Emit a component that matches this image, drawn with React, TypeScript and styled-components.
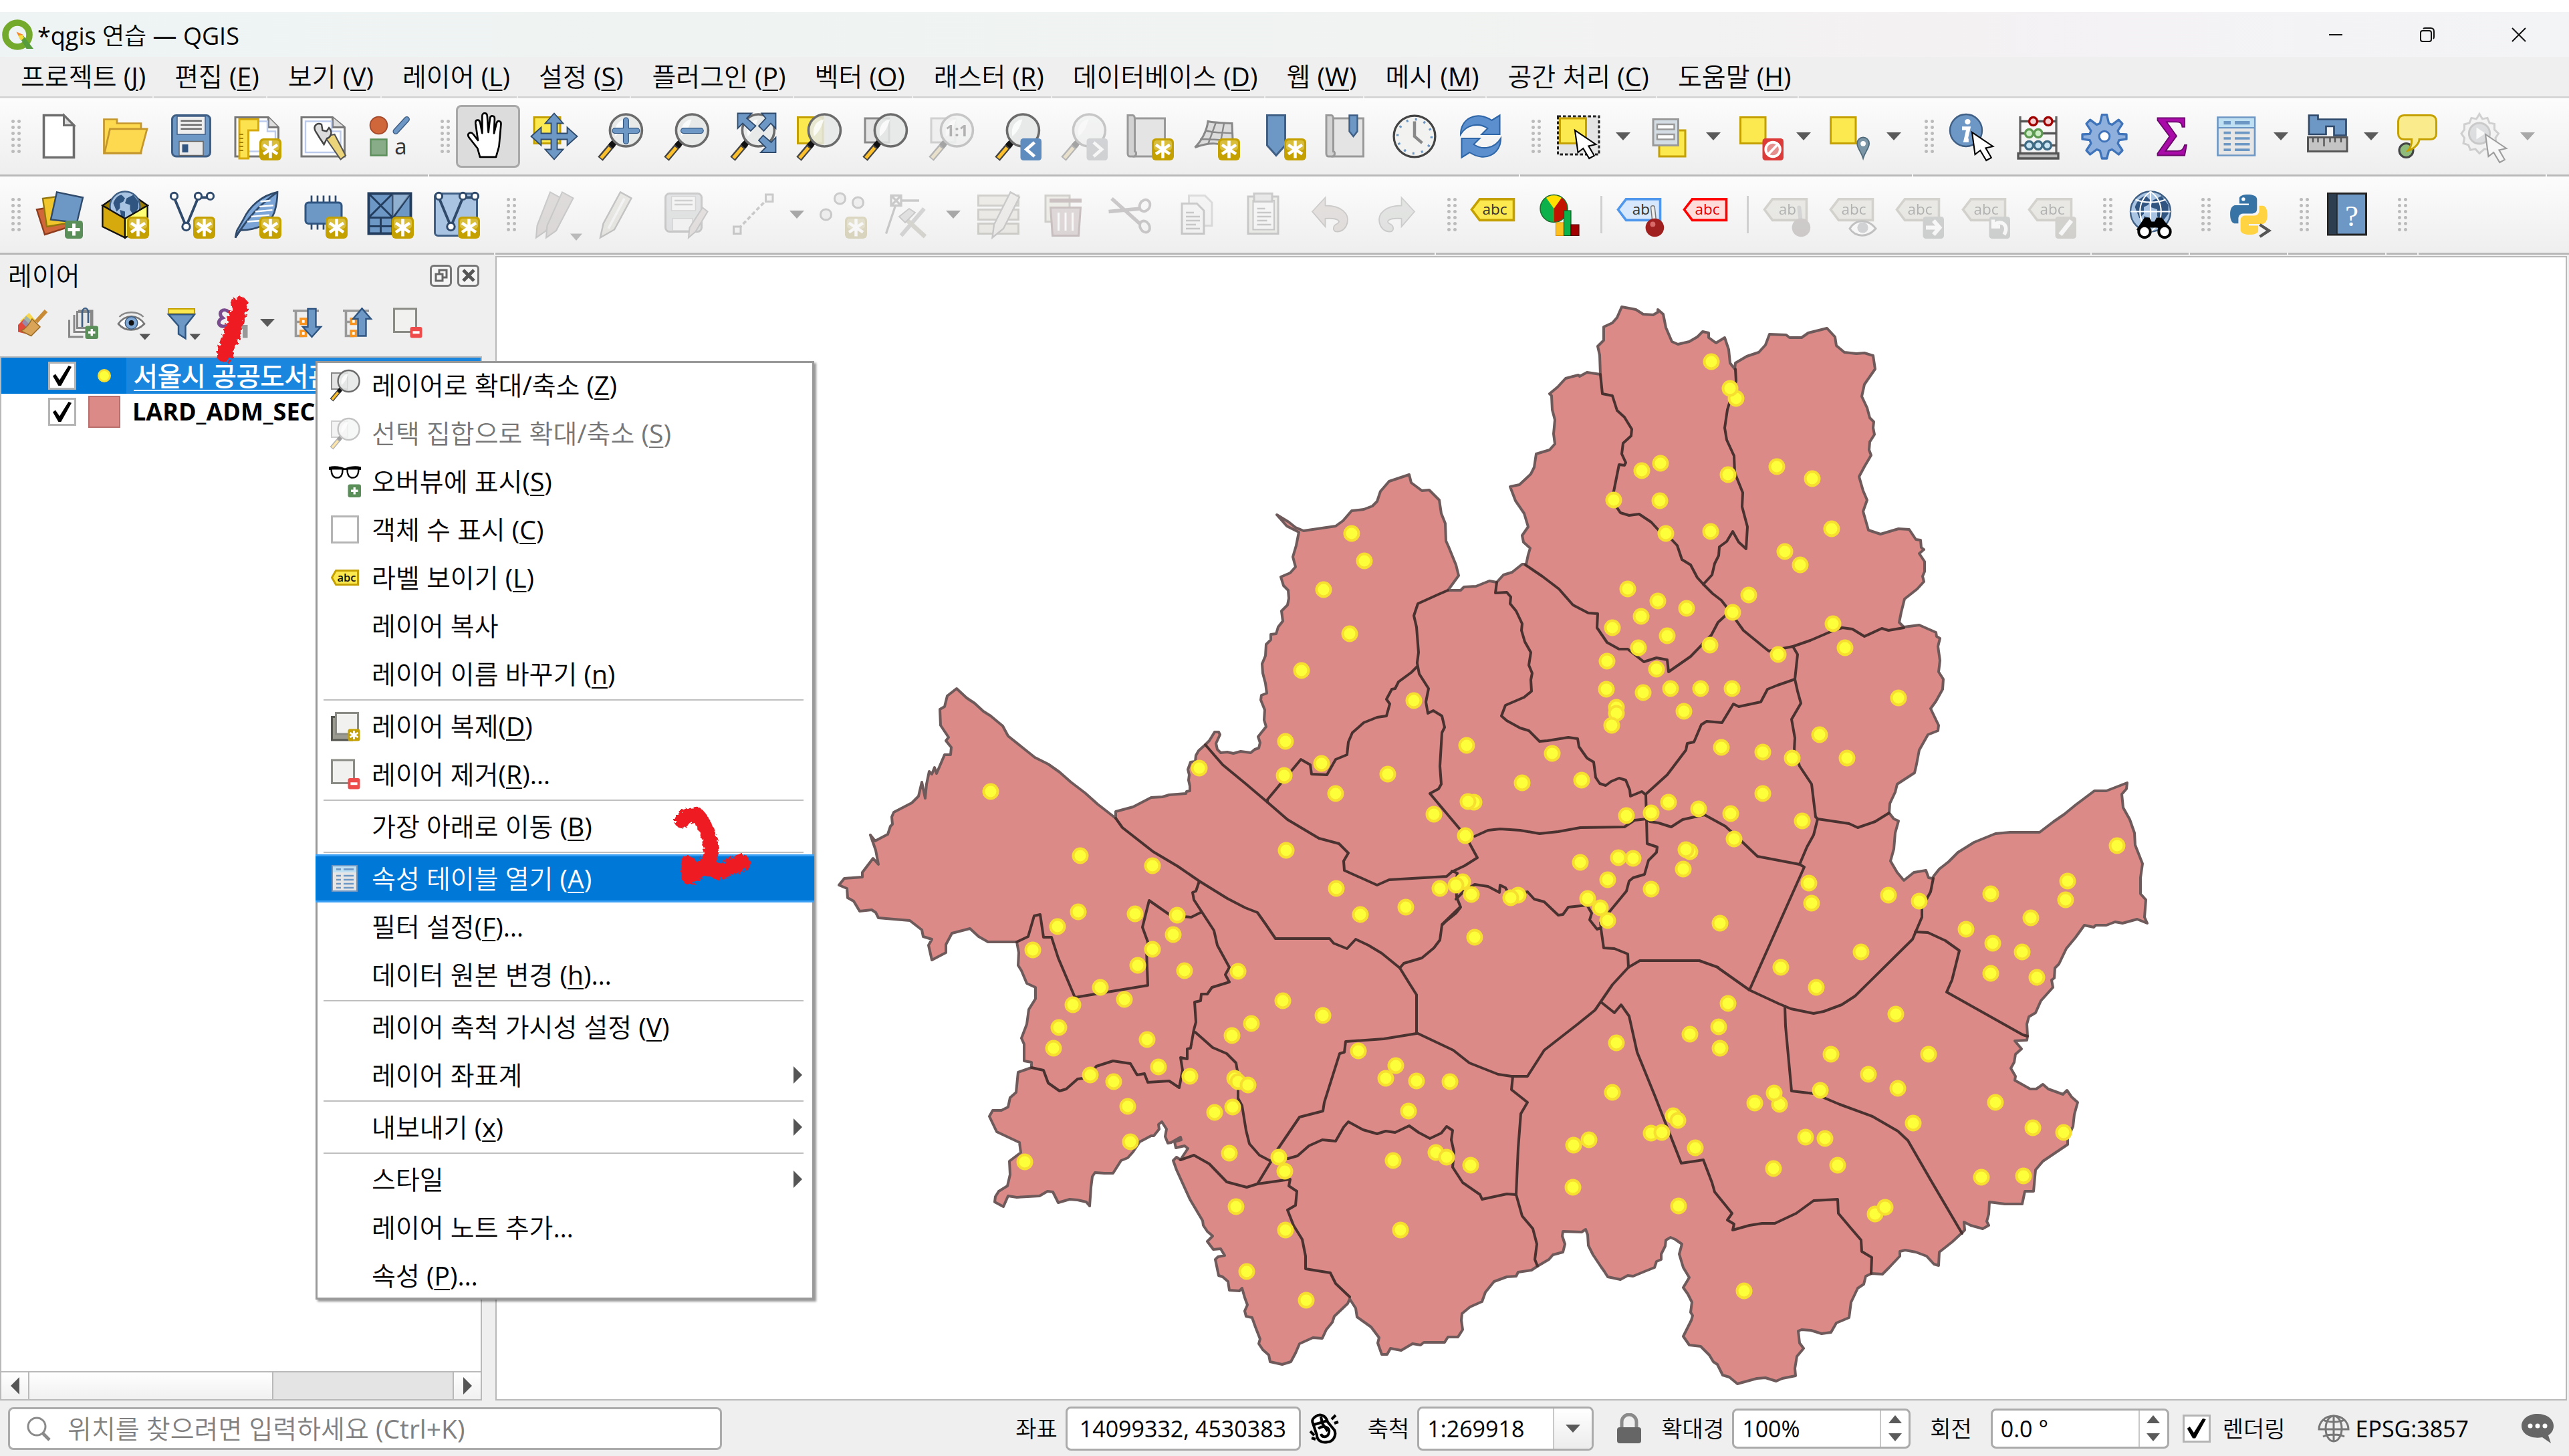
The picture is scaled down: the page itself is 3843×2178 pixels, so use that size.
import React from "react";
import styled, { createGlobalStyle, css } from "styled-components";

/* ------------------------------------------------------------------ */
/* Theme values                                                        */
/* ------------------------------------------------------------------ */

const sans = `"Open Sans", "Noto Sans CJK KR DemiLight", "Noto Sans CJK KR", sans-serif`;
const line = "#b9b9b9";
const chrome = "#efefef";
const accent = "#0078d7";

const GlobalStyle = createGlobalStyle`
  *, *::before, *::after { box-sizing: border-box; }
  body { margin: 0; background: #ffffff; font-family: ${sans}; color: #000000; }
  button, input, select { font-family: inherit; color: inherit; margin: 0; }
  svg { display: block; }
`;

/* ------------------------------------------------------------------ */
/* Toolbar icons, drawn on a 24 unit grid                              */
/* ------------------------------------------------------------------ */

const Star = () => (
  <g>
    <rect x="13" y="13" width="11" height="11" rx="2" fill="#c4a000" />
    <rect x="14" y="14" width="9" height="5" rx="1.5" fill="#d9bd3c" />
    <path d="M18.5 14.2v8.6M15 16.2l7 4.6M22 16.2l-7 4.6" stroke="#fff" strokeWidth="1.5" />
    <circle cx="18.5" cy="18.5" r="1.6" fill="#fff" />
  </g>
);

const Lens = () => (
  <g>
    <path d="M8.4 15.6L2 23.2" stroke="#444" strokeWidth="3.2" />
    <path d="M6.8 17.6L2.4 22.8" stroke="#fcc02c" strokeWidth="1.7" />
    <path d="M9.6 14.2L7.2 17" stroke="#111" strokeWidth="3" />
    <circle cx="14.8" cy="9" r="8" fill="#e4e8e6" fillOpacity=".85" stroke="#6b6b6b" strokeWidth="1.2" />
    <path d="M9.5 12c-1-4 1-8 5-8.500c-1 3-2 6-5 8.500z" fill="#fff" fillOpacity=".8" />
  </g>
);

const Tag = ({ fill, edge, text, ink = "#333" }: { fill: string; edge: string; text: string; ink?: string }) => (
  <g transform="translate(-1.500 .3)">
    <path d="M6 4h17v10.500H6L2 9.200z" fill={fill} stroke={edge} strokeWidth="1.2" />
    <text x="13.500" y="11.800" fontSize="7.500" textAnchor="middle" fill={ink} fontFamily="Open Sans">{text}</text>
  </g>
);

const Cursor = ({ x, y }: { x: number; y: number }) => (
  <path transform={`translate(${x} ${y})`} d="M0 0l1.500 11 2.600-2 3 5 2.500-1.400-2.800-4.800 3.600-.8z" fill="#fff" stroke="#000" strokeWidth=".7" />
);

const Badge = ({ color, children }: { color: string; children: React.ReactNode }) => (
  <g>
    <rect x="13.500" y="13" width="10.500" height="11" rx="1.500" fill={color} />
    {children}
  </g>
);

const Mesh = () => (
  <g fill="#fff" stroke="#2f4a6b" strokeWidth="1">
    <path d="M3.500 3.500L9.500 18 15.500 3.500h5.500" fill="none" strokeWidth="1.300" />
    <circle cx="3.500" cy="2.800" r="1.700" />
    <circle cx="9.500" cy="18" r="1.900" />
    <circle cx="15.500" cy="2.800" r="1.700" />
    <circle cx="21.500" cy="2.800" r="1.700" />
  </g>
);

const Sheet = () => (
  <g fill="#e4e4e4" stroke="#999" strokeWidth="1">
    <path d="M4.500 3h15v19H4z" />
    <path d="M1 1.500h2.500c1 0 1 1 1 2v16c1 0 1 2.500-.5 2.500H2c-.8 0-1-1-1-1.500z" fill="#d2d2d2" />
  </g>
);

const Globe = ({ cx, cy, r }: { cx: number; cy: number; r: number }) => (
  <g>
    <circle cx={cx} cy={cy} r={r} fill="#a9c4e2" stroke="#3f5f85" strokeWidth=".8" />
    <path transform={`translate(${cx} ${cy}) scale(${r / 9})`} d="M-7-2c1-3 3-5 5-5l2 2-1 2-2 1v3l-2 2zM1-5l4-2 3 4v4l-3 4-2-3 0-3-3-1zM-3 2l3 1 0 3-2 2z" fill="#2f5580" />
  </g>
);

const IC: Record<string, React.ReactNode> = {
  newDoc: (
    <g>
      <path d="M4.500 1.500h10l5 5v16h-15z" fill="#fff" stroke="#6d6d6d" strokeWidth="1.200" />
      <path d="M14.500 1.500v5h5z" fill="#ddd" stroke="#6d6d6d" strokeWidth="1" />
    </g>
  ),
  open: (
    <g fill="#fcd94f" stroke="#c4962c" strokeWidth=".9">
      <path d="M1.500 3.500h6.500v2h12v15h-18.500z" />
      <path d="M4.500 8.300h18.500l-3.200 12h-18z" />
    </g>
  ),
  save: (
    <g>
      <rect x="2.500" y="1.500" width="19" height="20.500" rx="2" fill="#6d97c4" stroke="#3f5f85" />
      <path d="M5 2h14v9H5z" fill="#eee" stroke="#3f5f85" strokeWidth=".5" />
      <path d="M6.800 4.300h10.500M6.800 6.300h10.500M6.800 8.300h10.500" stroke="#666" strokeWidth=".8" />
      <path d="M6 14.500h12v7H6z" fill="#eaeaea" stroke="#666" strokeWidth=".5" />
      <path d="M7.500 16h3v4h-3z" fill="#2f5580" />
    </g>
  ),
  layout: (
    <g>
      <path d="M1 2.500h16.500l5 5v14.500H1z" fill="#fff" stroke="#777" />
      <path d="M17.500 2.500v5h5" fill="#ddd" stroke="#777" />
      <path d="M4 4.500h13v5h4v10H4z" fill="none" stroke="#bccbec" strokeWidth=".8" />
      <path d="M3 3.500h9.500v5.500H7.500v14H3z" fill="#fce24f" stroke="#d6a90d" />
      <path d="M3 11h2M3 13h2M3 15h2M3 17h2M3 19h2" stroke="#a58100" strokeWidth=".7" />
      <Star />
    </g>
  ),
  layouts: (
    <g>
      <path d="M1 2.500h15.500l6 5v14.500H1z" fill="#fff" stroke="#777" />
      <path d="M16.500 2.500v5h6" fill="#ddd" stroke="#777" />
      <path d="M3 4.500h13v5h4.500v10.500H3z" fill="none" stroke="#bccbec" strokeWidth=".8" />
      <path d="M12.500 12l5 -1 5.500 10.500-2.500 2z" fill="#ecd47a" stroke="#555" strokeWidth=".7" />
      <path d="M8 9.500c-1.500-3 1-4.500 3-3.500l.5 3 2 .5 1.200-1.800c2.300 2.500.5 5-1 5.300l-1.500 3-2-3z" fill="#ddd" stroke="#444" strokeWidth=".8" />
    </g>
  ),
  styles: (
    <g>
      <circle cx="6.500" cy="6.500" r="4.300" fill="#d0673a" stroke="#a3482a" strokeWidth=".6" />
      <path d="M20.500 3.500l-5.500 6" stroke="#3f5f85" strokeWidth="3" strokeLinecap="round" />
      <path d="M20.500 3.500l-5.500 6" stroke="#6d97c4" strokeWidth="2" strokeLinecap="round" />
      <path d="M2.500 13.500h8v8h-8z" fill="#88ab88" stroke="#5a8f5a" strokeWidth=".8" />
      <text x="17.500" y="21" fontSize="11" textAnchor="middle" fill="#333" fontFamily="Open Sans">a</text>
    </g>
  ),
  hand: (
    <path
      d="M8 22.300L6.800 18 2.500 12.500c-1.200-2 .8-3.200 2.200-1.500l2.300 3L5.800 5.500c-.2-2 1.900-2.200 2.300-.3l1 5.200V1.800c0-1.800 2.400-1.800 2.500 0l.6 8.200.8-7c.3-1.700 2.400-1.500 2.300.2L15 10.500l1.300-5.200c.5-1.500 2.300-1 2.200.5L17.500 17 16 22.300z"
      fill="#fff" stroke="#000" strokeWidth=".9" strokeLinejoin="round"
    />
  ),
  pan: (
    <g>
      <path d="M2 2.500h13v13H2z" fill="#fce94f" stroke="#c4a000" />
      <path d="M12 .5l4.500 5h-3v5h5v-3l5 4.500-5 4.500v-3h-5v5h3L12 23.500l-4.500-5h3v-5h-5v3L.5 12l5-4.500v3h5v-5h-3z" fill="#6d97c4" stroke="#2f4a6b" strokeWidth=".6" />
    </g>
  ),
  zoomIn: (
    <g>
      <Lens />
      <path d="M14.800 4v10.500M9.300 9.200h11" stroke="#2f5580" strokeWidth="3" strokeLinecap="round" />
      <path d="M14.800 4v10.500M9.300 9.200h11" stroke="#6d97c4" strokeWidth="2.200" strokeLinecap="round" />
    </g>
  ),
  zoomOut: (
    <g>
      <Lens />
      <path d="M10.500 9.200h8.600" stroke="#2f5580" strokeWidth="3" strokeLinecap="round" />
      <path d="M10.500 9.200h8.600" stroke="#6d97c4" strokeWidth="2.200" strokeLinecap="round" />
    </g>
  ),
  zoomFull: (
    <g>
      <Lens />
      <path d="M4.500 .5h7L9 3l4.500 3.800-2.500 2.500L7 5.500 4.500 8zM23.500 .5v7.500L21 5.500l-3.500 3.800-2.500-2.500L18.500 3 16.500.5zM23.500 20h-7.500l2.500-2.500-3.500-3.500 2.200-2.500 4 3.500 2.300-2.500z" fill="#6d97c4" stroke="#2f4a6b" strokeWidth=".6" />
    </g>
  ),
  zoomSel: (
    <g>
      <path d="M1.500 2.500h12.500v13H1.500z" fill="#fce94f" stroke="#c4a000" />
      <Lens />
    </g>
  ),
  zoomLayer: (
    <g>
      <path d="M2 3h12v12H2z" fill="#e4e4e4" stroke="#888" />
      <Lens />
    </g>
  ),
  zoomOne: (
    <g>
      <path d="M2 3h12v12H2z" fill="#e4e4e4" stroke="#888" />
      <Lens />
      <text x="14.800" y="12" fontSize="8" fontWeight="700" textAnchor="middle" fill="#333" fontFamily="Open Sans">1:1</text>
    </g>
  ),
  zoomLast: (
    <g>
      <Lens />
      <Badge color="#5f8cbf"><path d="M20.500 15l-4 3.500 4 3.500" fill="none" stroke="#fff" strokeWidth="1.600" /></Badge>
    </g>
  ),
  zoomNext: (
    <g>
      <Lens />
      <Badge color="#8a97a5"><path d="M17 15l4 3.500-4 3.500" fill="none" stroke="#fff" strokeWidth="1.600" /></Badge>
    </g>
  ),
  newMap: (<g><Sheet /><Star /></g>),
  new3d: (
    <g>
      <path d="M8 4.500c4 .8 8 .8 12 1l.5 12c-7-2-11-3-19 0C5 14 7.500 9 8 4.500z" fill="#dcdcdc" stroke="#888" />
      <path d="M6.500 9c5 1.500 9 1 14 1.500M4 13.500c6-.5 11 .5 16.500 1M12 5l-4 11M16 5.500l-2 11" fill="none" stroke="#888" strokeWidth=".8" />
      <Star />
    </g>
  ),
  bookmarkNew: (
    <g>
      <path d="M4.500 1.500h9v15l-4.500 5-4.500-5z" fill="#6d97c4" stroke="#3f5f85" />
      <Star />
    </g>
  ),
  bookmarks: (
    <g>
      <Sheet />
      <path d="M12.500 1.500h4v8l-2 2.500-2-2.500z" fill="#6d97c4" stroke="#3f5f85" strokeWidth=".8" />
    </g>
  ),
  clock: (
    <g>
      <circle cx="12" cy="12" r="10.300" fill="#f2f3f0" stroke="#444" strokeWidth="1.100" />
      <circle cx="12" cy="12" r="8.500" fill="none" stroke="#6d97c4" strokeWidth="1.200" strokeDasharray="1 3.450" />
      <path d="M12 4.500V12l3.800 3.300" fill="none" stroke="#888" strokeWidth="1.500" />
    </g>
  ),
  refresh: (
    <g fill="#5b8fce" stroke="#2f66a8" strokeWidth=".7">
      <path d="M2 11c0-8 8-12 15.500-7l4-2.500V11h-9l3-3C11 5 5 6 2 11z" />
      <path d="M22 13c0 8-8 12-15.500 7l-4 2.500V13h9l-3 3c4.500 3 10.500 2 13.500-3z" />
    </g>
  ),
  select: (
    <g>
      <path d="M1.500 2h20.500v19H1.500z" fill="#e4e4e4" stroke="#222" strokeDasharray="1.500 1" />
      <path d="M2.500 3h13v12.500h-13z" fill="#fce94f" stroke="#c4a000" />
      <Cursor x={10} y={9} />
    </g>
  ),
  selectForm: (
    <g>
      <path d="M7 9h13v13H7z" fill="#fce94f" stroke="#c4a000" />
      <path d="M4 3.500h12.500v13H4z" fill="#d4dce4" stroke="#999" />
      <path d="M6 6h8.500v2.500H6zM6 11h8.500v2.500H6z" fill="#fff" stroke="#999" strokeWidth=".8" />
    </g>
  ),
  deselect: (
    <g>
      <path d="M2.500 2.500h12.500v13H2.500z" fill="#fce94f" stroke="#c4a000" />
      <Badge color="#dd3a3a"><circle cx="18.700" cy="18.500" r="3.600" fill="#e58f8f" stroke="#fff" strokeWidth="1.300" /><path d="M16.300 21l4.800-5" stroke="#fff" strokeWidth="1.300" /></Badge>
    </g>
  ),
  selectLoc: (
    <g>
      <path d="M2.500 2.500h12.500v13H2.500z" fill="#fce94f" stroke="#c4a000" />
      <path d="M18.700 23c-1-3.500-3-5-3-7.500a3 3 0 0 1 6 0c0 2.500-2 4-3 7.500z" fill="#7b96a6" stroke="#4f6b7c" strokeWidth=".6" />
      <circle cx="18.700" cy="15.600" r="1.300" fill="#fff" />
    </g>
  ),
  identify: (
    <g>
      <circle cx="9" cy="9" r="8" fill="#6d97c4" stroke="#3f5f85" strokeWidth=".8" />
      <circle cx="9.800" cy="4.700" r="1.400" fill="#fff" />
      <path d="M7 8h3.200L8.800 14h1.500" fill="none" stroke="#fff" strokeWidth="1.900" />
      <Cursor x={12} y={10} />
    </g>
  ),
  abacus: (
    <g fill="none" strokeWidth="1.100">
      <path d="M3 2v19M21 2v19" stroke="#666" />
      <path d="M3 4.500h18M3 10.500h18M3 16.500h18" stroke="#555" />
      <g fill="#f6d0d0" stroke="#a00000"><circle cx="9.500" cy="4.500" r="2" /><circle cx="17" cy="4.500" r="2" /></g>
      <g fill="#cdeec5" stroke="#5c9a52"><circle cx="7.500" cy="10.500" r="2" /><circle cx="12" cy="10.500" r="2" /></g>
      <g fill="#c9e4f3" stroke="#3f6b85"><circle cx="7.500" cy="16.500" r="2" /><circle cx="12" cy="16.500" r="2" /><circle cx="16.500" cy="16.500" r="2" /></g>
      <path d="M2 20.500h20v2.500H2z" fill="#bbb" stroke="#555" />
    </g>
  ),
  gear: (
    <g>
      <path d="M10.800 1.200h2.400l1 4.300 1.600.7 3.300-2.500 1.900 2-2.300 3.500.6 1.600 3.700.2v2.400l-3.700.5-.6 1.600 2.300 3.500-1.900 2-3.300-2.500-1.600.7-1 3.800h-2.400l-1-3.800-1.600-.7L4.900 21 3 19l2.300-3.500-.6-1.600-3.700-.5V11l3.700-.2.600-1.600L3 5.700l1.900-2 3.300 2.500 1.600-.7z" fill="#8fb0dc" stroke="#3f74bb" strokeWidth="1.100" strokeLinejoin="round" />
      <circle cx="12" cy="12" r="2.600" fill="#fff" stroke="#3f74bb" />
    </g>
  ),
  sigma: (
    <path d="M5.500 2.800h13.500v4.500h-1.200c-.3-2-1-2.500-3-2.500H10l5 7-5.500 7.500h6c2 0 2.800-.8 3.500-3h1l-1 5.200H5.500v-1l6-8.500-6-8z" fill="#a80ba8" stroke="#6b066b" strokeWidth=".6" />
  ),
  table: (
    <g>
      <path d="M2.500 2.500h18.500v19H2.500z" fill="#e6e6e6" stroke="#6d97c4" strokeWidth=".9" />
      <path d="M3 3h17.500v4.500H3z" fill="#bfe0f3" />
      <path d="M2.500 7.700h18.500" stroke="#6d97c4" strokeWidth=".8" />
      <path d="M5.500 5.200h3.500M11 5.200h7.500" stroke="#6d97c4" strokeWidth="1.800" />
      <path d="M5.500 10.200h3.500M11 10.200h7.500M5.500 13h3.500M11 13h7.500M5.500 15.900h3.500M11 15.900h7.500M5.500 18.700h3.500M11 18.700h7.500" stroke="#6d97c4" strokeWidth="1.200" />
    </g>
  ),
  measure: (
    <g>
      <path d="M3 1.500h4.500v2h14v8h-6v-4.500h-4v4H3z" fill="#6d97c4" stroke="#2f4a6b" strokeWidth=".9" />
      <path d="M2.500 12.500h19.500v7H2.500z" fill="#c4c4c4" stroke="#555" />
      <path d="M5 12.500v2.500M7.500 12.500v2.500M10.500 12.500v4.500M13.500 12.500v2.500M16 12.500v2.500M19 12.500v2.500" stroke="#555" strokeWidth=".8" />
    </g>
  ),
  tip: (
    <g>
      <circle cx="6.500" cy="19" r="3.500" fill="#8fbc7c" stroke="#444" />
      <path d="M5.500 1.500h13c2 0 3 1.200 3 3v6c0 1.800-1 3-3 3h-5.500c0 2-2.500 4.800-5.500 5.500 1.300-1.500 1.800-3.200 1.700-5.500H5.500c-2 0-3-1.200-3-3v-6c0-1.800 1-3 3-3z" fill="#faec8c" stroke="#c4a000" />
    </g>
  ),
  action: (
    <g>
      <path d="M10 .8l1.500 2.500 2.500-.5 1 2.500 2.500.5v2.800l2 2-1.500 2.200.5 2.700-2.500.8-1 2.500-2.500-.5L10 20.500 8 18.300l-2.500.5-1-2.500-2.500-.8.5-2.700L1 10.600l1.500-2V6l2.500-.7 1-2.500 2.500.5z" fill="#eee" stroke="#888" />
      <circle cx="10" cy="10.500" r="5.200" fill="#a8b4c0" stroke="#777" />
      <path d="M8.500 7.500v6l4.500-3z" fill="#fff" />
      <Cursor x={13} y={11} />
    </g>
  ),
  addLayers: (
    <g>
      <path d="M1 9.500l11-2 4 11-11 3.500z" fill="#d0673a" stroke="#8d3c1e" strokeWidth=".8" />
      <path d="M4 4l11-1.500 3 13.500-12 2z" fill="#f0c62c" stroke="#94770c" strokeWidth=".8" />
      <path d="M11 .8l13 2.700-3 12.500-13-1.500z" fill="#6d97c4" stroke="#2f4a6b" strokeWidth=".8" />
      <rect x="15" y="15" width="9" height="9" rx="1.500" fill="#5a8f5a" />
      <path d="M19.500 16.500v6M16.500 19.500h6" stroke="#fff" strokeWidth="1.600" />
    </g>
  ),
  geopackage: (
    <g>
      <path d="M.8 7.500l5-3.500h12.500l5 3.500L12 14z" fill="#9c7c00" stroke="#111" strokeWidth=".8" />
      <Globe cx={12} cy={8} r={7.500} />
      <path d="M.8 7.500L12 14v9.500L.8 18z" fill="#d6a90d" stroke="#111" strokeWidth=".8" />
      <path d="M23.200 7.500L12 14v9.500L23.200 18z" fill="#ffff77" stroke="#111" strokeWidth=".8" />
      <Star />
    </g>
  ),
  shapefile: (<g><Mesh /><Star /></g>),
  feather: (
    <g>
      <path d="M22 .8C14 2.500 8 8 5 14.500L1.800 20 1 23.500l2.500-3.700c8 0 15-3 17-9C21.500 7.500 22 4 22 .8z" fill="#7aa5d6" stroke="#2f4a6b" strokeWidth=".9" />
      <path d="M22 .8C13 7 7 14 1 23.500" fill="none" stroke="#2f4a6b" strokeWidth=".9" />
      <path d="M13 8l7-.6M11 10.500l8.500-.8M9 13l9-.8M7 15.500l8.500-.6M13.500 5.500l5-.5" stroke="#fff" strokeWidth=".8" />
      <Star />
    </g>
  ),
  memory: (
    <g>
      <path d="M6 2.500v17M9 2.500v17M12 2.500v17M15 2.500v17M18 2.500v17" stroke="#2f4a6b" strokeWidth=".9" />
      <rect x="3" y="6" width="18" height="10.500" rx="1.500" fill="#6d97c4" stroke="#2f5580" />
      <Star />
    </g>
  ),
  gridLayer: (
    <g>
      <path d="M1.500 1.500h21v12h-9v8h-12z" fill="#6d97c4" stroke="#223d5e" strokeWidth="1.300" />
      <path d="M13.500 1.500v13M1.500 13.500h21M2 2l11 11M13 2L2 13M22 2L14 13M7.500 14v8M2 17.800h11" fill="none" stroke="#223d5e" strokeWidth="1" />
      <path d="M13.500 2h8.500l-8.500 11z" fill="#b4c9e0" fillOpacity=".5" />
      <Star />
    </g>
  ),
  virtual: (
    <g>
      <rect x="1.500" y="1.500" width="21" height="21" rx="1.500" fill="#a9c4e2" stroke="#3f5f85" />
      <Mesh />
      <Star />
    </g>
  ),
  pencils: (
    <g fill="#b9a5a0" stroke="#777" strokeWidth=".7">
      <path d="M10 .8l5.500 3L8 20l-5 3.500.5-6z" />
      <path d="M16 .8l5.500 3L13 20l-5 3.500.5-6z" />
      <path d="M20 21.500h6l-3 3.500z" fill="#555" stroke="none" />
    </g>
  ),
  pencil: (
    <g>
      <path d="M12 .8l5.500 3L9 19.500 2 23.500l1.500-7z" fill="#cfc9ae" stroke="#666" strokeWidth=".8" />
      <path d="M14 4L6 19" stroke="#eee" strokeWidth="1.200" />
    </g>
  ),
  saveEdits: (
    <g>
      <rect x="1.500" y="1.500" width="18" height="19" rx="2" fill="#b9bfc6" stroke="#777" />
      <path d="M4.500 3h12v7h-12zM5 14h10v6H5z" fill="#eee" stroke="#999" strokeWidth=".5" />
      <path d="M6 5h9M6 7h9" stroke="#888" strokeWidth=".8" />
      <path d="M20 8.500l2.500 2-6 10-3.500 3 .5-5z" fill="#cbb5ac" stroke="#777" strokeWidth=".7" />
    </g>
  ),
  digitize: (
    <g>
      <path d="M5 19L18.500 5" stroke="#777" strokeWidth="1.200" strokeDasharray="2 1.200" />
      <path d="M2.500 18h3.500v3.500H2.500zM18.500 2h3.500v3.500h-3.500z" fill="#eee" stroke="#777" />
    </g>
  ),
  points: (
    <g>
      <g fill="#dde0dd" stroke="#777"><circle cx="10.500" cy="4" r="2.700" /><circle cx="19.500" cy="6" r="2.700" /><circle cx="3.500" cy="12" r="2.700" /></g>
      <Star />
    </g>
  ),
  vertex: (
    <g>
      <path d="M3 2.500h5v5H3zM3 2.500l5 5M8 2.500l-5 5M8 5h9M5 8L.5 21.500" fill="none" stroke="#777" strokeWidth="1.100" />
      <path d="M19.500 9L8 22.500" stroke="#999" strokeWidth="2" />
      <path d="M9 13l11 10" stroke="#a39b7a" strokeWidth="2.200" />
      <path d="M7 13l5-4 3 2-5 5z" fill="#bbb" stroke="#777" strokeWidth=".6" />
    </g>
  ),
  multiEdit: (
    <g>
      <path d="M1.500 2.500h20v5h-20zM1.500 9.500h20v5h-20zM1.500 16.500h20v5h-20z" fill="#dcd6b4" stroke="#8c8768" />
      <path d="M17.500 .8l4.500 2.500L14 19l-5.500 4.500.8-6.500z" fill="#e6d5cf" stroke="#777" strokeWidth=".8" />
    </g>
  ),
  trash: (
    <g>
      <path d="M2 2.500h12v13H2z" fill="#e2dcb4" stroke="#8c8768" />
      <path d="M4.500 8.500h15l-1 14h-13z" fill="#cf9aa0" stroke="#96555c" />
      <path d="M8.500 11v9M12 11v9M15.500 11v9" stroke="#fff" strokeWidth="1" />
      <path d="M4 5h16" stroke="#96555c" strokeWidth="2" />
    </g>
  ),
  cut: (
    <g fill="none" stroke="#7d7272">
      <path d="M2 4l14 12.500M.5 10.500L16.500 9" strokeWidth="1.800" />
      <ellipse cx="18.500" cy="7.500" rx="2.500" ry="3" transform="rotate(30 18.500 7.500)" strokeWidth="1.300" />
      <ellipse cx="18.500" cy="18" rx="2.300" ry="3" transform="rotate(-30 18.500 18)" strokeWidth="1.300" />
    </g>
  ),
  copy: (
    <g fill="#eee" stroke="#777">
      <path d="M7.500 2.500h8l3.500 3.500v11.500H7.500z" strokeOpacity=".6" />
      <path d="M4 6.500h7.500l3.500 3.500v11.500H4z" />
      <path d="M6 11h4M6 13h7M6 15h7M6 17h5M6 19h7" strokeWidth=".8" />
    </g>
  ),
  paste: (
    <g>
      <path d="M4 3h15v18.500H4z" fill="#dcd9c8" stroke="#777" />
      <path d="M6.500 5h10.500v14.500H6.500z" fill="#f4f4f4" stroke="#777" strokeWidth=".7" />
      <path d="M7 1.500h9v4H7z" fill="#ccc" stroke="#777" />
      <path d="M8.500 9h4M8.500 11h7M8.500 13h7M8.500 15h5M8.500 17h7" stroke="#777" strokeWidth=".8" />
    </g>
  ),
  undo: (<path d="M3 10.500l6.500-7v4c8 0 12 4 11 8.500-.6 2.700-2.500 4.500-5 4.500-2.500 0-2.500-3 0-4 2-1 .5-3-6-2.500v4z" fill="#c9b2a8" stroke="#8a7a72" strokeWidth=".6" />),
  redo: (<path d="M21 10.500l-6.500-7v4c-8 0-12 4-11 8.500.6 2.700 2.500 4.500 5 4.500 2.500 0 2.500-3 0-4-2-1-.5-3 6-2.500v4z" fill="#b9c4b9" stroke="#7a857a" strokeWidth=".6" />),
  label: (<Tag fill="#fce94f" edge="#c4a000" text="abc" />),
  diagram: (
    <g>
      <circle cx="8.500" cy="9" r="6.800" fill="#ffe000" />
      <path d="M8.500 9L4.500 3.400A6.800 6.800 0 0 0 8.500 15.800z" fill="#0db14b" />
      <path d="M8.500 9l4-5.600A6.800 6.800 0 0 1 8.500 15.800z" fill="#c41200" />
      <circle cx="8.500" cy="9" r="6.800" fill="none" stroke="#1f6b2c" strokeWidth=".5" />
      <path d="M9.500 16h4v6.500h-4z" fill="#fbbf20" stroke="#e09000" strokeWidth=".4" />
      <path d="M13.500 10h3.500v12.500h-3.500z" fill="#0db14b" stroke="#07551f" strokeWidth=".4" />
      <path d="M17 17h4v5.500h-4z" fill="#a00000" stroke="#500" strokeWidth=".4" />
    </g>
  ),
  labelPin: (
    <g>
      <Tag fill="#d7e8fc" edge="#4f97ec" text="ab" />
      <path d="M17.800 8.500l.8 7" stroke="#777" strokeWidth="2.400" strokeLinecap="round" />
      <path d="M17.800 8.500l.8 7" stroke="#eee" strokeWidth="1.400" strokeLinecap="round" />
      <circle cx="18.800" cy="18.500" r="4.600" fill="#a02020" />
      <circle cx="17.800" cy="16.800" r="1.300" fill="#d96a6a" />
    </g>
  ),
  labelRed: (<Tag fill="#ffdcdc" edge="#ff0000" text="abc" ink="#e00000" />),
  labelMove: (
    <g>
      <Tag fill="#d4d0b4" edge="#96906a" text="abc" />
      <Badge color="#888c90"><path d="M15 18.500h6.500M18.800 15l3 3.500-3 3.500" fill="none" stroke="#fff" strokeWidth="2" /></Badge>
    </g>
  ),
  labelEye: (
    <g>
      <Tag fill="#d4d0b4" edge="#96906a" text="abc" />
      <path d="M10 19c3-5 9-5 13 0-4 4.500-10 4.500-13 0z" fill="#fff" stroke="#666" />
      <circle cx="16.500" cy="18.500" r="2.700" fill="#8a97a5" />
    </g>
  ),
  labelTurn: (
    <g>
      <Tag fill="#d4d0b4" edge="#96906a" text="abc" />
      <Badge color="#888c90"><path d="M21 22c3-5-2-8-5.500-4.500M15.500 14.500v3.500h3.500" fill="none" stroke="#fff" strokeWidth="1.800" /></Badge>
    </g>
  ),
  labelEdit: (
    <g>
      <Tag fill="#d4d0b4" edge="#96906a" text="abc" />
      <Badge color="#999476"><path d="M21.500 15l-5.500 7" stroke="#fff" strokeWidth="2.200" /></Badge>
    </g>
  ),
  labelPinGray: (
    <g>
      <Tag fill="#d4d0b4" edge="#96906a" text="ab" />
      <path d="M17.800 8.500l.8 7" stroke="#999" strokeWidth="2" strokeLinecap="round" />
      <circle cx="18.800" cy="18.500" r="4.600" fill="#957c7c" />
    </g>
  ),
  metasearch: (
    <g>
      <Globe cx={12} cy={10.500} r={10} />
      <path d="M2 10.500h20M12 .5v20M4.500 4.500c4 1.800 11 1.800 15 0M12 .5c-7 5-7 15 0 20M12 .5c7 5 7 15 0 20" fill="none" stroke="#fff" strokeWidth=".7" />
      <path d="M9 13.500h2.500l1 2h1.500l1-2h2.500l5 6-4 3-3-4h-4l-2.500 4-4-3z" fill="#000" />
      <circle cx="9" cy="20.500" r="2.900" fill="#fff" stroke="#000" strokeWidth="1.300" />
      <circle cx="19" cy="20.500" r="2.900" fill="#fff" stroke="#000" strokeWidth="1.300" />
    </g>
  ),
  python: (
    <g>
      <path d="M11.500 2c-4.500 0-4.200 2-4.200 2v2.500h4.700v.8H5.500S2.700 7 2.700 11.800s2.500 4.600 2.500 4.600h1.600V14s0-2.500 2.500-2.500h4.500s2.300 0 2.300-2.300V4.500S16.500 2 11.500 2z" fill="#3773a5" />
      <circle cx="9.300" cy="4.300" r=".9" fill="#fff" />
      <path d="M12.500 22c4.500 0 4.200-2 4.200-2v-2.500H12v-.8h6.500s2.800.3 2.800-4.500-2.500-4.600-2.500-4.600h-1.600V10s0 2.500-2.500 2.500h-4.500s-2.300 0-2.300 2.300v4.700S7.500 22 12.500 22z" fill="#ffd342" />
      <path d="M17.500 17l4.500 3-4.500 3" fill="none" stroke="#555" strokeWidth="1.500" />
    </g>
  ),
  help: (
    <g>
      <path d="M2.500 1.500h19v20.500h-19z" fill="#6d97c4" stroke="#222" />
      <path d="M2.500 1.500H7V22H2.500z" fill="#2c3e4f" stroke="#222" strokeWidth=".5" />
      <text x="14.300" y="17.500" fontSize="15" textAnchor="middle" fill="#fff" fontFamily="Liberation Serif">?</text>
    </g>
  ),
};

/* Panel and menu icons, drawn on a 16 unit grid */
const SM: Record<string, React.ReactNode> = {
  brush: (
    <g>
      <path d="M2 7l4.500-4L10 7l-3 5z" fill="#f7d74c" />
      <path d="M1 9l3-3 4 4-3 3.500-4-1z" fill="#e0493c" />
      <path d="M5 4.500L9 8 6 11 3 8z" fill="#7aa5d6" fillOpacity=".7" />
      <path d="M8 6l4 4-4.500 4.500L2.500 12c2-1 4-3 5.500-6z" fill="#d9a458" stroke="#9a6a24" strokeWidth=".5" />
      <path d="M10 7.500L15 2" stroke="#c98a35" strokeWidth="2" />
    </g>
  ),
  group: (
    <g fill="none" stroke="#888">
      <path d="M1.500 6.500v8.500h7M4 4v8.500h6M6 2h7v8" />
      <path d="M5.500 2.500h7v8h-7z" fill="#e8e8e8" />
      <path d="M8 10V3c0-3 3-3 3 0v5" stroke="#3f5f85" strokeWidth=".9" />
      <rect x="9.500" y="9.500" width="6.500" height="6.500" rx="1" fill="#5a8f5a" stroke="none" />
      <path d="M12.750 11v3.500M11 12.750h3.500" stroke="#fff" strokeWidth="1.100" />
    </g>
  ),
  eye: (
    <g>
      <path d="M1 8.500c3.500-5 9.500-5 13 0-4 4-9.500 4-13 0z" fill="#fff" stroke="#777" strokeWidth=".9" />
      <path d="M1.500 5c3-3 9-3 12 0" fill="none" stroke="#888" strokeWidth=".8" />
      <circle cx="7.500" cy="8" r="3.100" fill="#7fa8d4" stroke="#3f5f85" strokeWidth=".5" />
      <circle cx="7.500" cy="8" r="1.300" fill="#111" />
      <path d="M11.500 13.500h5.500l-2.750 3z" fill="#555" />
    </g>
  ),
  filter: (
    <g>
      <path d="M1 1h13v2.500H1z" fill="#fce94f" stroke="#c4a000" strokeWidth=".7" />
      <path d="M1 3.800h13L9.500 9.500v6.300L6 13.500v-4z" fill="#6d97c4" stroke="#2f5580" strokeWidth=".8" />
      <path d="M11.500 13.500h5.500l-2.750 3z" fill="#555" />
    </g>
  ),
  expr: (
    <g>
      <path d="M6 2.500C3.500 0 0 3 3 5.500c-3.500 1.500-2 6 3 3.500" fill="none" stroke="#7a4b8f" strokeWidth="1.700" />
      <path d="M8 9h7.500v6.500H13V11h-2v4.500H8z" fill="#999" />
    </g>
  ),
  expand: (
    <g>
      <path d="M1 2h13M2.500 2v12.500h4M2.500 7.500h4" fill="none" stroke="#999" strokeWidth="1.200" />
      <path d="M5 6h2.500v2.500H5zM5 12h2.500v2.500H5z" fill="#fff" stroke="#f7931e" strokeWidth="1.200" />
      <path d="M8.500 1h4v9h2.500l-4.500 5-4.500-5h2.500z" fill="#6d97c4" stroke="#2f5580" strokeWidth=".8" />
    </g>
  ),
  collapse: (
    <g>
      <path d="M1 2h13M2.500 2v12.500h4M2.500 7.500h4" fill="none" stroke="#999" strokeWidth="1.200" />
      <path d="M5 6h2.500v2.500H5zM5 12h2.500v2.500H5z" fill="#fff" stroke="#f7931e" strokeWidth="1.200" />
      <path d="M8.500 14.500h4v-8.500h2.500L10.500 .8 6 6h2.500z" fill="#6d97c4" stroke="#2f5580" strokeWidth=".8" />
    </g>
  ),
  remove: (
    <g>
      <path d="M1.500 1h11v11.500h-11z" fill="#f1f1ef" stroke="#8b8b85" />
      <rect x="9.500" y="10" width="6" height="5.500" rx="1" fill="#ee4b4b" />
      <path d="M10.800 12.750h3.400" stroke="#fff" strokeWidth="1.300" />
    </g>
  ),
  lens: (<g transform="scale(.667)"><path d="M2 3h12v12H2z" fill="#e4e4e4" stroke="#888" /><Lens /></g>),
  glasses: (
    <g>
      <path d="M0 .8c2.500-.7 5-.5 8 .7 3-1.200 5.500-1.400 8-.7v1.500h-16z" fill="#000" />
      <path d="M1.200 1.800h5.600c.2 2.700-.7 4.400-2.700 4.400S1.200 4.500 1.200 1.800zM9.200 1.800h5.600c0 2.700-.9 4.400-2.900 4.400S9 4.500 9.200 1.800z" fill="#fff" stroke="#000" strokeWidth=".8" />
      <rect x="9.500" y="9.500" width="6.500" height="6.500" rx="1" fill="#5a8f5a" />
      <path d="M12.750 11v3.500M11 12.750h3.500" stroke="#fff" strokeWidth="1.100" />
    </g>
  ),
  tag: (
    <g>
      <path d="M3.500 4.500h11v7h-11L1.500 8z" fill="#fce94f" stroke="#c4a000" />
      <text x="8.800" y="10" fontSize="5.500" fontWeight="600" textAnchor="middle" fill="#111" fontFamily="Open Sans">abc</text>
    </g>
  ),
  duplicate: (
    <g>
      <path d="M1.500 3.500h10V15h-10z" fill="#9a9a90" stroke="#55554f" />
      <path d="M3.500 1.500h11v10.500h-11z" fill="#f1f1ef" stroke="#8b8b85" />
      <rect x="9.500" y="9.500" width="6" height="6" rx="1" fill="#c4a000" />
      <path d="M12.500 10.300v4.400M10.500 11.400l4 2.200M14.500 11.400l-4 2.200" stroke="#fff" strokeWidth=".9" />
    </g>
  ),
  table: (<g transform="scale(.667)"><path d="M2.500 2.500h18.500v19H2.500z" fill="#e6e6e6" stroke="#6d97c4" /><path d="M3 3h17.500v4.500H3z" fill="#bfe0f3" /><path d="M5.500 5.200h3.500M11 5.200h7.500M5.500 10h3.500M11 10h7.500M5.500 13h3.500M11 13h7.500M5.500 16h3.500M11 16h7.500M5.500 19h3.500M11 19h7.500" stroke="#6d97c4" strokeWidth="1.300" /></g>),
};

const Icon24 = ({ name }: { name: string }) => (
  <svg width="72" height="72" viewBox="0 0 24 24" overflow="visible" aria-hidden="true">{IC[name]}</svg>
);
const Icon16 = ({ name }: { name: string }) => (
  <svg width="48" height="48" viewBox="0 0 16 16" overflow="visible" aria-hidden="true">{SM[name]}</svg>
);

/* ------------------------------------------------------------------ */
/* Map geometry: five survey sheets, each with its own origin and step */
/* ------------------------------------------------------------------ */

type SheetId = "A" | "B" | "C" | "D" | "E";
const SHEETS: Record<SheetId, [number, number, number, number]> = {
  A: [1240, 980, 1050 / 1568, 860 / 1568],
  B: [1800, 650, 800 / 1568, 750 / 1568],
  C: [2200, 430, 800 / 1568, 950 / 1568],
  D: [1700, 1350, 900 / 1568, 720 / 1568],
  E: [2400, 1150, 850 / 1568, 940 / 1568],
};

const project = (id: SheetId, data: string) => {
  const [ox, oy, sx, sy] = SHEETS[id];
  return data.trim().split(/\s+/).map((p) => {
    const [x, y] = p.split(",").map(Number);
    return [Math.round(ox + x * sx), Math.round(oy + y * sy)] as const;
  });
};
const join = (parts: [SheetId, string][]) => parts.flatMap(([id, d]) => project(id, d)).map((p) => p.join(",")).join(" ");

const OUTLINE = join([
  ["A", "285,90 308,115 325,130 345,152 362,165 388,192 400,218 430,248 460,277 490,295 515,317 540,345 572,373 600,405 640,443 641,424 680,412 720,386 745,384 760,380 798,376 799,370 806,368 806,355 803,340 805,325 802,310 808,290 818,288 820,272 826,258 840,242 850,232 862,208 871,208 873,216 864,238 868,256 875,265 890,262 903,266 920,261 943,265"],
  ["B", "150,983 163,978 167,962 160,943 185,912 178,890 180,860 169,828 171,814 187,806 182,775 175,745 173,715 182,690 185,655 197,640 198,622 213,620 220,600 234,582 230,550 246,530 250,510 248,485 235,470 228,443 255,430 270,412 262,380 272,345 281,304 245,285 215,248 250,272 270,288 294,300 388,285 410,268 435,236 470,232 495,222 510,208 520,175 545,145 575,133 603,124 610,148 640,174 662,172 692,203 698,245 709,275 712,330 720,350 740,405 748,440 717,485 754,485 765,474 800,472 838,455 860,460 880,436 905,428 935,404 946,403 952,375 958,353 938,335 934,313 952,287 940,245 915,205 900,162 928,155 960,122 970,100"],
  ["C", "193,410 232,400 247,385 244,360 247,325 240,300 238,265 231,260 255,245 278,222 315,215 320,218 342,208 380,213 378,165 372,143 390,128 390,95 415,86 430,72 443,47 485,52 505,64 535,66 549,60 549,52 565,65 573,98 590,132 607,139 640,132 665,120 680,108 697,110 698,122 720,136 745,122 757,152 760,185 775,200 777,185 810,168 845,158 865,140 877,114 925,116 935,122 970,122 990,110 1045,99 1069,120 1072,142 1095,158 1130,162 1155,160 1180,167 1186,200 1155,238 1146,268 1162,295 1170,320 1181,330 1179,345 1184,362 1170,380 1168,400 1174,412 1155,440 1138,465 1150,500 1162,523 1150,552 1158,575 1167,598 1202,608 1255,594 1285,596 1305,620 1320,622 1322,640 1328,645 1316,655 1330,675 1330,700 1325,712 1328,725 1310,742 1272,767 1262,800 1256,825 1270,836 1315,832 1365,850 1367,860 1375,865 1370,885 1376,920 1372,948 1386,965 1384,990 1365,1020 1348,1038 1372,1080 1370,1093 1340,1103 1315,1140 1308,1175 1302,1197 1250,1225 1245,1245 1228,1272 1226,1295 1240,1310 1255,1315 1245,1345 1240,1385 1230,1415 1250,1442 1270,1462 1300,1443 1335,1438 1342,1455 1355,1458"],
  ["E", "910,265 925,248 950,230 975,207 1020,182 1080,160 1120,157 1200,157 1240,130 1270,112 1300,88 1352,54 1385,53 1442,34 1441,48 1428,62 1432,95 1450,125 1462,158 1465,188 1485,235 1480,270 1480,310 1494,325 1490,368 1498,383 1470,373 1430,383 1410,381 1385,389 1355,388 1350,394 1325,388 1300,418 1275,447 1255,485 1243,495 1242,520 1235,525 1237,543 1205,577 1190,608 1172,617 1165,635 1167,665 1165,676 1133,678 1152,698 1135,710 1130,730 1122,745 1134,765 1132,775 1175,798 1192,798 1210,785 1225,798 1265,811 1277,801 1290,818 1306,830 1296,860 1294,890 1278,920 1278,935 1210,977 1190,1000 1185,1052 1160,1053 1153,1085 1105,1084 1062,1080 1060,1110 1055,1128 1060,1138 1045,1146 1010,1138 992,1130 994,1150 985,1157 960,1180 925,1205 922,1237 910,1235 890,1215 860,1205 830,1200 816,1203 815,1215 785,1243 768,1259 738,1257 722,1265 715,1285 700,1295 680,1330 675,1368 640,1382 625,1405 600,1408 570,1400 545,1398 535,1402 538,1432 550,1445 531,1465 525,1495 528,1513 490,1520 475,1527 445,1518 420,1520 367,1533 345,1516 327,1512 312,1485 300,1478 290,1462 265,1439 235,1437 218,1415 240,1375 244,1362 238,1355 241,1330 230,1310 217,1293 234,1268 217,1242 207,1210 214,1185 195,1172 183,1168 170,1175 168,1190 157,1210 157,1222 143,1228 138,1243 110,1252 80,1265 65,1262 45,1273"],
  ["D", "1228,1218 1220,1200 1210,1185 1190,1145 1178,1115 1176,1080 1170,1062 1160,1071 1112,1070 1110,1085 1117,1110 1112,1137 1085,1145 1075,1160 1045,1183 1030,1196 995,1202 990,1216 965,1217 932,1233 910,1268 900,1297 870,1315 848,1338 846,1360 850,1390 838,1413 812,1413 803,1431 750,1430 740,1440 720,1436 690,1456 662,1450 653,1470 640,1470 629,1433 632,1416 612,1380 575,1348 571,1320 556,1290 550,1305 515,1345 510,1365 495,1390 485,1418 460,1416 425,1435 415,1465 403,1495 380,1502 348,1494 345,1473 330,1455 318,1435 322,1420 310,1380 302,1350 285,1345 282,1328 290,1308 283,1285 275,1255 268,1263 242,1260 238,1232 225,1218 215,1212 206,1160 212,1152 230,1147 220,1126 200,1128 184,1102 198,1085 185,1070 175,1050 172,1035 140,965 104,870 95,838 105,828 115,837 120,825 134,800 125,790 103,797 100,778 117,770 115,762 90,780 82,782 75,760 78,735 67,712 58,720 60,735 45,758"],
  ["A", "720,1310 694,1326 680,1352 668,1369 652,1376 635,1412 615,1412 595,1410 588,1420 585,1450 582,1500 575,1489 555,1485 538,1482 512,1491 500,1462 488,1460 470,1473 420,1476 400,1473 390,1503 370,1490 372,1475 380,1460 398,1445 405,1415 403,1378 428,1355 426,1328 375,1298 358,1256 366,1240 385,1240 400,1230 405,1205 418,1190 422,1135 453,1123 453,1108 436,1105 436,1060 430,1043 442,1005 446,965 462,935 462,905 442,893 430,858 422,845 424,810 420,780 355,780 335,765 315,743 275,757 262,788 262,810 230,829 222,790 230,773 210,765 208,747 180,722 110,714 105,700 95,693 68,696 55,670 42,660 40,635 22,625 35,608 75,604 75,590 98,553 110,568 105,530 92,488 103,505 132,487 138,465 142,460 140,440 145,427 185,402 200,382 207,345 215,388 218,350 224,315 230,322 236,305 240,320 258,270 272,270 274,250 262,232 268,222 250,190 248,145 258,138 265,110 285,90"],
]);

const BORDERS = [
  join([
    ["A", "640,443 655,468 725,535 780,575 828,614 890,662 930,688 957,701 975,732 998,772 1118,772 1127,784 1157,798 1177,773 1205,790 1235,812 1276,852 1295,890 1312,925 1312,1028 1395,1075 1430,1110 1495,1142 1525,1147"],
    ["D", "985,565 1020,565 1063,480 1150,395 1195,348 1240,265 1282,210 1312,188 1467,188 1515,208"],
    ["E", "312,494 400,550 480,583 515,597 578,609 605,604 655,587 692,565 850,423 877,368 877,345 900,305 908,272"],
  ]),
  join([
    ["A", "840,242 880,298 930,348 980,400 1025,447 1095,497 1140,513 1160,538 1150,560 1152,585 1224,625 1252,610 1380,601 1392,588 1420,572 1448,550 1422,491 1342,375 1362,362 1368,350 1365,300 1369,210 1376,195 1370,165 1350,150 1338,157 1333,125 1340,90 1318,50 1314,20"],
    ["B", "627,710 632,680 625,600 617,565 630,527 690,498 717,485"],
  ]),
  join([["A", "1314,30 1300,45 1272,72 1265,90 1258,92 1245,118 1253,132 1245,165 1225,167 1195,182 1170,210 1160,235 1158,270 1132,282 1112,325 1078,322 1075,297 1055,282 980,392 980,400"]]),
  join([
    ["B", "795,1255 835,1236 870,1231 930,1235 985,1247 1040,1240 1105,1227 1235,1226 1265,1205 1299,1200 1310,1208 1335,1212 1372,1226 1405,1202 1440,1193 1470,1187 1530,1222 1555,1245"],
    ["C", "800,1370 840,1403 965,1423 978,1430"],
    ["E", "400,550"],
  ]),
  join([["C", "965,1423 985,1380 1005,1350 1017,1310"]]),
  join([["B", "1299,1200 1297,1125 1285,1115 1252,1128 1250,1110 1238,1078 1220,1073 1195,1083 1180,1096 1162,1090 1150,1070 1145,1022 1125,1010 1102,975 1098,950 1070,945 1010,955 985,958 955,925 930,915 890,893 874,878 885,845 940,820 962,800 960,765 964,745 955,720 961,680 942,645 933,610 935,590 918,550 900,527 902,505 890,492 856,494 860,460"]]),
  join([["B", "1297,1122 1360,1062 1415,985 1420,963 1438,960 1460,905 1475,895 1520,898"], ["C", "770,1027 785,1034 850,1022 870,990 900,980 950,965"]]),
  join([["C", "950,965 958,905 945,885 875,897 865,890 800,845 748,785 735,770 710,755 683,732 665,715 645,683 620,670 605,635 572,606 550,597 530,577 493,558 465,562 440,555 420,530 418,510 435,435 450,438 455,430 443,410 447,383 470,365 472,348 450,318 430,302 415,266 387,260 380,213"]]),
  join([["C", "683,732 707,708 715,680 728,660 730,638 750,625 768,600 785,627 808,643 812,590 795,540 797,505 775,455 773,415 750,375 744,345 752,300 778,230 777,200"]]),
  join([["C", "160,683 210,712 258,742 300,783 345,802 373,803 370,838 400,875 435,892 460,892 508,922 545,913 577,917 580,947 645,910 705,857 725,825 750,805"]]),
  join([["C", "945,885 995,870 1065,845 1090,838 1120,842 1155,860 1205,840 1225,845 1270,838"]]),
  join([["C", "950,965 958,995 968,1025 940,1065 950,1110 948,1140 965,1180 1000,1225 1012,1305 1017,1310 1110,1322 1135,1332 1185,1317 1226,1295"]]),
  join([["B", "1299,1200 1301,1278 1330,1288 1328,1305 1305,1330 1293,1373 1260,1383 1248,1395 1240,1425 1185,1497 1165,1525 1167,1540 1155,1545 1132,1515 1138,1495 1125,1470 1070,1475 1055,1500 1040,1502 1000,1460 970,1450 950,1427 900,1440 885,1415 870,1408 868,1430 835,1412 795,1405 765,1425 740,1450"]]),
  join([["B", "730,1363 745,1370 740,1400 742,1445 755,1475 740,1495 700,1530"], ["A", "1410,685 1370,735 1365,775 1352,797 1325,825 1285,838 1276,852"]]),
  join([["D", "1210,85 1218,145 1245,148 1280,165 1282,210"]]),
  join([["E", "498,590 500,640 517,802 580,809 650,835 740,865 810,902 838,925 900,1025 987,1157"]]),
  join([["E", "857,405 892,407 940,427 979,452 960,525 944,556 1155,662 1167,665"]]),
  join([
    ["D", "1210,322 1245,358 1263,330 1284,367 1305,485 1350,625 1420,848 1478,836 1500,910 1507,940 1553,1010 1540,1032 1557,1045"],
    ["E", "355,1150 400,1138 435,1132 470,1133 530,1108 578,1076 644,1072 645,1108 675,1140 708,1175 710,1203 738,1217 736,1257"],
  ]),
  join([["D", "980,565 978,608 1020,650 1002,687 995,800 990,950 1005,1020 1033,1060 1043,1110 1038,1160 1045,1183"]]),
  join([["D", "990,950 965,947 900,965 895,950 850,910 824,860 828,810 820,770 824,740 808,728 795,750 765,766 735,747 710,726 675,748 650,742 628,752 590,738 552,712 540,730 520,775 485,772 450,790 420,823 395,832 372,830"]]),
  join([["D", "730,424 645,442 545,451 542,485 530,490 490,650 486,677 425,697 370,800 350,842 316,915"]]),
  join([["D", "372,832 350,840 320,822 295,785 285,740 275,660 265,635 265,560 260,520 235,490 198,470 153,420"]]),
  join([["D", "115,837 150,822 190,850 235,908 287,925 316,915 400,900 398,922 418,938 415,985 394,1000 410,1050 432,1095 440,1150 440,1192 505,1205 520,1240 556,1282"]]),
  join([["A", "828,614 820,642 812,645 815,665 860,750 868,790 895,850 885,870 895,890 855,905 845,922 832,922 830,940 817,945 820,1000 815,1020 808,1070 800,1072 800,1100 785,1095 790,1130 782,1178 760,1160 712,1163 705,1140 688,1143 673,1112 635,1105 598,1120 580,1150 555,1155 530,1182 515,1187 490,1165 480,1130 453,1123"]]),
  join([["A", "420,780 445,765 458,710 472,706 480,768 497,768 512,825 550,932 713,898 710,800 712,780 700,740 716,668 765,710 810,712 830,700"]]),
];

const LIBRARIES = ([
  ["A", "362,371 562,546 723,573 557,698 511,738 456,803 684,703 778,708 769,761 723,800 690,845 795,858 914,860 607,905 660,938 545,952 514,1013 502,1071 711,1046 736,1122 807,1146 584,1144 636,1161 668,1228 674,1325 438,1381 1014,940 1104,980 944,1002 901,1036 907,1152 914,1161 937,1171 902,1231 862,1245 895,1356 1005,1368 1019,1405 910,1503 827,307 1056,41 1020,233 1017,327 1101,293 1132,375 1249,322 1306,123 1022,531 1134,634 1187,705 1288,685 1365,635 1416,617 1401,625 1435,650 1352,433 1422,491 1425,245 1441,400 1428,397 1549,347 1539,653 1523,660 1442,767 1182,1077 1267,1118 1244,1153 1313,1159 1388,1162 1295,1241 1261,1376 1356,1354 1380,1367 1434,1389"],
  ["B", "435,308 472,394 352,482 429,620"],
  ["C", "705,182 778,272 760,248 556,432 501,450 755,461 554,525 419,524 572,606 703,600 897,441 1001,471 1058,595 922,651 966,684 815,758 768,800 1062,828 901,905 1097,888 1254,1011 1023,1103 1103,1160 461,743 548,773 633,791 499,811 415,838 576,859 491,888 701,882 399,921 544,940 586,988 505,999 674,989 766,988 397,991 428,1035 427,1049 413,1080 625,1045 735,1134 856,1146 942,1161 239,1148 325,1215 856,1247 580,1270 529,1295 456,1303 668,1286 762,1298 972,1316 772,1360 642,1392 631,1387 623,1434 529,1483 321,1418 434,1407 476,1408 401,1461 343,1507 381,1530 401,1562"],
  ["D", "389,1064 287,1200 443,1294 689,1064 1180,770 1140,789 1138,926"],
  ["E", "1415,190 1278,279 1273,326 1066,311 1177,370 998,398 1072,433 1153,456 1066,508 1194,518 868,328 784,314 564,284 572,333 708,456 487,494 584,543 320,384 341,584 315,643 236,661 319,696 34,683 23,806 804,610 625,711 895,710 728,760 810,795 596,800 852,883 1079,830 1182,894 1267,906 1040,1018 1156,1015 415,833 483,835 468,808 190,864 202,876 130,908 158,906 250,944 555,918 608,921 643,988 466,996 748,1110 774,1093 204,1090 385,1301"],
] as [SheetId, string][]).flatMap(([id, d]) => project(id, d));

/* ------------------------------------------------------------------ */
/* Window chrome                                                       */
/* ------------------------------------------------------------------ */

const Page = styled.div`
  position: relative;
  display: flex;
  flex-direction: column;
  height: 100vh;
  padding-top: 18px;
  overflow: hidden;
`;

const TitleBar = styled.header`
  display: flex;
  align-items: center;
  flex: none;
  height: 67px;
  padding: 0 7px 0 2px;
  background: linear-gradient(90deg, #eef4f4, #f0f3f1 55%, #f4f1f3 75%, #f3f4f6);
`;

const Title = styled.h1`
  flex: 1;
  margin: 0;
  padding-left: 6px;
  font-size: 36px;
  font-weight: 400;
`;

const WindowButton = styled.button`
  display: grid;
  place-items: center;
  width: 137px;
  height: 64px;
  border: 0;
  background: none;
`;

const MenuBar = styled.nav`
  display: flex;
  flex: none;
  height: 62px;
  background: linear-gradient(#d6d6d6, #d6d6d6) bottom / 100% 3px no-repeat, ${chrome};
`;

const MenuTitle = styled.button`
  border: 0;
  padding: 0 12px 4px 31px;
  background: linear-gradient(${chrome}, ${chrome}) right bottom / 2px 3px no-repeat;
  font-size: 39px;
  line-height: 54px;
  white-space: nowrap;
`;

const Mnemonic = styled.u`
  text-decoration-thickness: 2px;
  text-underline-offset: 5px;
`;

/* An ampersand marks the shortcut letter that follows it. */
const Caption = ({ text }: { text: string }) => {
  const at = text.indexOf("&");
  if (at < 0) return <>{text}</>;
  return <>{text.slice(0, at)}<Mnemonic>{text[at + 1]}</Mnemonic>{text.slice(at + 2)}</>;
};

const ToolBar = styled.div`
  display: flex;
  flex: none;
  height: 117px;
  background: linear-gradient(${line}, ${line}) bottom / 100% 3px no-repeat, linear-gradient(#fcfcfc, #eeeeee);
`;

const ToolGroup = styled.div`
  display: flex;
  align-items: center;
  gap: 3px;
  padding: 0 11px 3px 15px;
  background: linear-gradient(#f4f4f4, #f4f4f4) right bottom / 2px 3px no-repeat;
`;

const Grip = styled.div`
  width: 16px;
  height: 54px;
  margin-right: 6px;
  background: radial-gradient(circle, #bcbcbc 2px, transparent 3px) 0 0 / 9px 9px;
`;

const ToolButton = styled.button<{ $wide?: boolean; $pressed?: boolean }>`
  display: flex;
  align-items: center;
  gap: 19px;
  width: ${(p) => (p.$wide ? 132 : 96)}px;
  height: 94px;
  padding: 0 0 0 9px;
  border: 3px solid ${(p) => (p.$pressed ? "#a8a8a8" : "transparent")};
  border-radius: 8px;
  background: ${(p) => (p.$pressed ? "#dcdcdc" : "none")};
  & > svg { flex: none; }
  &:disabled > svg { opacity: 0.35; filter: grayscale(0.6); }
  &:disabled > span { opacity: 0.5; }
`;

const DropArrow = styled.span`
  border: solid transparent;
  border-width: 12px 11px 0;
  border-top-color: #5a5a5a;
`;

const ToolDivider = styled.div`
  width: 18px;
  height: 56px;
  background: linear-gradient(#d0d0d0, #d0d0d0) center / 3px 100% no-repeat;
`;

type Tool = { icon: string; label: string; off?: boolean; menu?: boolean; pressed?: boolean } | "|";

const t = (icon: string, label: string, extra: object = {}): Tool => ({ icon, label, ...extra });
const off = { off: true };
const menu = { menu: true };

const TOP_TOOLS: Tool[][] = [
  [t("newDoc", "새 프로젝트"), t("open", "열기"), t("save", "저장"), t("layout", "새 조판"), t("layouts", "조판 관리자"), t("styles", "스타일 관리자")],
  [
    t("hand", "이동", { pressed: true }), t("pan", "선택 집합으로 이동"), t("zoomIn", "확대"), t("zoomOut", "축소"), t("zoomFull", "전체 보기"),
    t("zoomSel", "선택 영역 확대"), t("zoomLayer", "레이어 확대"), t("zoomOne", "원본 해상도", off), t("zoomLast", "이전 보기"),
    t("zoomNext", "다음 보기", off), t("newMap", "새 지도 보기"), t("new3d", "새 3D 보기"), t("bookmarkNew", "새 북마크"),
    t("bookmarks", "북마크 표시"), t("clock", "시간 제어기"), t("refresh", "새로고침"),
  ],
  [t("select", "객체 선택", menu), t("selectForm", "값으로 선택", menu), t("deselect", "선택 해제", menu), t("selectLoc", "위치로 선택", menu)],
  [
    t("identify", "객체 식별"), t("abacus", "필드 계산기"), t("gear", "공간 처리 툴박스"), t("sigma", "통계 요약"),
    t("table", "속성 테이블", menu), t("measure", "측정", menu), t("tip", "맵 도움말"), t("action", "객체 액션", { off: true, menu: true }),
  ],
];

const EDIT_TOOLS: Tool[][] = [
  [t("addLayers", "데이터 소스 관리자"), t("geopackage", "새 지오패키지"), t("shapefile", "새 Shapefile"), t("feather", "새 SpatiaLite"), t("memory", "임시 레이어"), t("gridLayer", "새 메시"), t("virtual", "새 가상 레이어")],
  [
    t("pencils", "현재 편집", off), t("pencil", "편집 모드", off), t("saveEdits", "편집 저장", off), t("digitize", "디지타이즈", { off: true, menu: true }),
    t("points", "포인트 추가", off), t("vertex", "꼭짓점 도구", { off: true, menu: true }), t("multiEdit", "속성 수정", off), t("trash", "삭제", off),
    t("cut", "잘라내기", off), t("copy", "복사", off), t("paste", "붙여넣기", off), t("undo", "실행 취소", off), t("redo", "다시 실행", off),
  ],
  [
    t("label", "라벨 작업"), t("diagram", "다이어그램"), "|", t("labelPin", "고정 라벨"), t("labelRed", "미배치 라벨"), "|",
    t("labelPinGray", "라벨 고정", off), t("labelEye", "라벨 표시", off), t("labelMove", "라벨 이동", off), t("labelTurn", "라벨 회전", off), t("labelEdit", "라벨 변경", off),
  ],
  [t("metasearch", "메타 검색")],
  [t("python", "파이썬 콘솔")],
  [t("help", "도움말")],
  [],
];

const Tools = ({ groups }: { groups: Tool[][] }) => (
  <ToolBar>
    {groups.map((group, g) => (
      <ToolGroup key={g}>
        <Grip />
        {group.map((tool, i) =>
          tool === "|" ? <ToolDivider key={i} /> : (
            <ToolButton key={i} type="button" aria-label={tool.label} disabled={tool.off} $wide={tool.menu} $pressed={tool.pressed}>
              <Icon24 name={tool.icon} />
              {tool.menu && <DropArrow />}
            </ToolButton>
          ),
        )}
      </ToolGroup>
    ))}
  </ToolBar>
);

/* ------------------------------------------------------------------ */
/* Work area                                                           */
/* ------------------------------------------------------------------ */

const Workspace = styled.main`
  display: grid;
  grid-template-columns: 721px minmax(0, 1fr);
  column-gap: 20px;
  flex: 1;
  min-height: 0;
  padding: 2px 3px 0 0;
  background: ${chrome};
`;

const LayerPanel = styled.section`
  display: flex;
  flex-direction: column;
  min-height: 0;
`;

const PanelHeader = styled.div`
  display: flex;
  align-items: center;
  gap: 8px;
  flex: none;
  height: 58px;
  padding: 0 4px 0 12px;
`;

const PanelTitle = styled.h2`
  flex: 1;
  margin: 0;
  font-size: 39px;
  font-weight: 400;
  line-height: 54px;
`;

const PanelButton = styled.button`
  display: grid;
  place-items: center;
  width: 33px;
  height: 33px;
  padding: 0;
  border: 3px solid #777;
  border-radius: 6px;
  background: #f4f4f4;
`;

const PanelTools = styled.div`
  display: flex;
  align-items: center;
  gap: 27px;
  flex: none;
  height: 92px;
  padding: 0 24px 8px;
`;

const PanelTool = styled.button<{ $wide?: boolean }>`
  display: flex;
  align-items: center;
  gap: 17px;
  width: ${(p) => (p.$wide ? 84 : 48)}px;
  height: 48px;
  padding: 0;
  border: 0;
  background: none;
`;

const Tree = styled.ul`
  flex: 1;
  min-height: 0;
  margin: 0;
  padding: 0;
  overflow: hidden;
  list-style: none;
  border: 2px solid ${line};
  border-bottom: 0;
  background: #fff;
`;

const LayerRow = styled.li<{ $selected?: boolean }>`
  display: flex;
  align-items: center;
  height: 54px;
  padding-left: 70px;
  ${(p) => p.$selected && css`
    background: linear-gradient(90deg, ${accent} 187px, #1a86de 187px);
    color: #fff;
  `}
`;

const CheckBox = styled.input`
  appearance: none;
  display: grid;
  place-items: center;
  flex: none;
  width: 42px;
  height: 42px;
  border: 3px solid #b4b4b4;
  background: #fff;
  &:checked::after {
    content: "";
    width: 28px;
    height: 30px;
    background: #000;
    clip-path: polygon(0 52%, 14% 42%, 36% 72%, 84% 0, 100% 6%, 44% 100%, 30% 100%);
  }
`;

const Symbol = styled.span<{ $kind: "dot" | "fill" }>`
  flex: none;
  margin: 0 18px;
  ${(p) => (p.$kind === "dot"
    ? css`width: 20px; height: 20px; margin: 0 34px 0 32px; border-radius: 50%; background: #fdff3a; border: 3px solid #f7df30;`
    : css`width: 48px; height: 48px; background: #dc8a87; border: 2px solid #b96e6b;`)}
`;

const LayerName = styled.label<{ $current?: boolean }>`
  font-size: ${(p) => (p.$current ? 39 : 36)}px;
  font-weight: 700;
  line-height: 54px;
  white-space: nowrap;
  text-decoration: ${(p) => (p.$current ? "underline" : "none")};
  text-decoration-thickness: 2px;
  text-underline-offset: 6px;
`;

const ScrollBar = styled.div`
  display: grid;
  grid-template-columns: 42px 365px minmax(0, 1fr) 42px;
  flex: none;
  height: 44px;
  border: 2px solid ${line};
  background: #e4e4e4;
`;

const ScrollPart = styled.button`
  display: grid;
  place-items: center;
  padding: 0;
  border: 0;
  border-right: 2px solid ${line};
  background: linear-gradient(#fff, #f0f0f0);
  &:last-child { grid-column: 4; border-right: 0; border-left: 2px solid ${line}; }
`;

const SideArrow = styled.span<{ $left?: boolean }>`
  border: solid transparent;
  border-width: 13px 0 13px 13px;
  border-left-color: #555;
  transform: ${(p) => (p.$left ? "scaleX(-1)" : "none")};
`;

const MapView = styled.section`
  min-height: 0;
  border: 2px solid ${line};
  background: #fff;
  & > svg { width: 100%; height: 100%; }
`;

const MapCanvas = () => (
  <MapView aria-label="지도">
    <svg viewBox="743 385 3095 1706">
      <g strokeLinejoin="round" strokeLinecap="round">
        <polygon points={OUTLINE} fill="#dc8a87" stroke="#6e5a5a" strokeWidth="4" />
        {BORDERS.map((b, i) => <polyline key={i} points={b} fill="none" stroke="#4a3231" strokeWidth="4" />)}
      </g>
      {LIBRARIES.map(([x, y], i) => (
        <circle key={i} cx={x} cy={y} r="10.500" fill="#fdff3a" stroke="#f7df30" strokeWidth="4" />
      ))}
    </svg>
  </MapView>
);

/* ------------------------------------------------------------------ */
/* Context menu                                                        */
/* ------------------------------------------------------------------ */

const Popup = styled.div`
  position: absolute;
  left: 472px;
  top: 540px;
  width: 746px;
  background: #fff;
  box-shadow: inset 0 0 0 3px #999, 3px 3px 3px rgba(0, 0, 0, 0.4);
`;

const PopupItem = styled.button<{ $active?: boolean }>`
  display: grid;
  grid-template-columns: 48px minmax(0, 1fr) 13px;
  align-items: center;
  column-gap: 16px;
  width: 100%;
  height: 72px;
  padding: 0 18px 0 20px;
  border: 3px solid ${(p) => (p.$active ? "#3aa0f5" : "transparent")};
  border-width: 3px 0;
  background: ${(p) => (p.$active ? accent : "none")};
  color: ${(p) => (p.$active ? "#fff" : "#000")};
  font-size: 39px;
  line-height: 54px;
  text-align: left;
  white-space: nowrap;
  &:disabled { color: #777; }
  &:disabled svg { opacity: 0.4; }
`;

const PopupRule = styled.hr`
  height: 2px;
  margin: 2px 16px 2px 12px;
  border: 0;
  background: #bfbfbf;
`;

const EmptyBox = styled.span`
  width: 42px;
  height: 42px;
  margin-left: 3px;
  border: 3px solid #b4b4b4;
  background: #fff;
`;

type Entry = { text: string; icon?: string; box?: boolean; off?: boolean; active?: boolean; sub?: boolean } | null;

const ENTRIES: Entry[] = [
  { text: "레이어로 확대/축소 (&Z)", icon: "lens" },
  { text: "선택 집합으로 확대/축소 (&S)", icon: "lens", off: true },
  { text: "오버뷰에 표시(&S)", icon: "glasses" },
  { text: "객체 수 표시 (&C)", box: true },
  { text: "라벨 보이기 (&L)", icon: "tag" },
  { text: "레이어 복사" },
  { text: "레이어 이름 바꾸기 (&n)" },
  null,
  { text: "레이어 복제(&D)", icon: "duplicate" },
  { text: "레이어 제거(&R)…", icon: "remove" },
  null,
  { text: "가장 아래로 이동 (&B)" },
  null,
  { text: "속성 테이블 열기 (&A)", icon: "table", active: true },
  { text: "필터 설정(&F)…" },
  { text: "데이터 원본 변경 (&h)…" },
  null,
  { text: "레이어 축척 가시성 설정 (&V)" },
  { text: "레이어 좌표계", sub: true },
  null,
  { text: "내보내기 (&x)", sub: true },
  null,
  { text: "스타일", sub: true },
  { text: "레이어 노트 추가…" },
  { text: "속성 (&P)…" },
];

const ContextMenu = () => (
  <Popup role="menu">
    {ENTRIES.map((e, i) =>
      e === null ? <PopupRule key={i} /> : (
        <PopupItem key={i} type="button" role="menuitem" disabled={e.off} $active={e.active}>
          {e.icon ? <Icon16 name={e.icon} /> : e.box ? <EmptyBox /> : <span />}
          <span><Caption text={e.text} /></span>
          {e.sub && <SideArrow />}
        </PopupItem>
      ),
    )}
  </Popup>
);

/* Red crayon numbers written over the window */
const Crayon = styled.svg`
  position: absolute;
  left: 320px;
  top: 430px;
  pointer-events: none;
`;

/* ------------------------------------------------------------------ */
/* Status bar                                                          */
/* ------------------------------------------------------------------ */

const StatusBar = styled.footer`
  display: flex;
  align-items: center;
  flex: none;
  height: 83px;
  padding: 0 22px 0 12px;
  background: ${chrome};
  font-size: 34px;
  line-height: 48px;
  white-space: nowrap;
`;

const box = css`
  border: 3px solid #ababab;
  border-radius: 8px;
  background: #fff;
`;

const SearchBox = styled.label`
  ${box}
  display: flex;
  align-items: center;
  gap: 24px;
  width: 1068px;
  height: 64px;
  margin-right: auto;
  padding: 0 24px;
`;

const PlainInput = styled.input`
  flex: 1;
  min-width: 0;
  padding: 0;
  border: 0;
  outline: 0;
  background: none;
  font-size: inherit;
  &::placeholder { color: #808080; opacity: 1; }
`;

const SearchInput = styled(PlainInput)`
  font-size: 39px;
`;

const Field = styled.div<{ $space: number; $gap?: number }>`
  display: flex;
  align-items: center;
  gap: ${(p) => p.$gap ?? 12}px;
  margin-right: ${(p) => p.$space}px;
`;

const CoordBox = styled.span`
  ${box}
  display: flex;
  width: 352px;
  height: 66px;
  padding: 0 18px;
`;

const ComboBox = styled.span`
  ${box}
  display: grid;
  grid-template-columns: minmax(0, 1fr) 58px;
  width: 264px;
  height: 66px;
`;

const ScaleSelect = styled.select`
  grid-area: 1 / 1 / 2 / 3;
  appearance: none;
  padding: 0 12px;
  border: 0;
  background: none;
  font-size: inherit;
`;

const ComboArrow = styled.span`
  grid-area: 1 / 2;
  display: grid;
  place-items: center;
  border-left: 2px solid #c8c8c8;
  border-radius: 0 6px 6px 0;
  background: linear-gradient(#fff, #ececec);
  pointer-events: none;
`;

const SpinBox = styled.span`
  ${box}
  display: grid;
  grid-template-columns: minmax(0, 1fr) 43px;
  width: 267px;
  height: 60px;
  padding-left: 12px;
`;

const SpinButtons = styled.span`
  display: grid;
  border-left: 2px solid #c8c8c8;
`;

const SpinButton = styled.button<{ $down?: boolean }>`
  display: grid;
  place-items: center;
  padding: 0;
  border: 0;
  background: none;
  & > span { transform: ${(p) => (p.$down ? "none" : "rotate(180deg)")}; border-width: 12px 10px 0; }
`;

const FlatButton = styled.button`
  display: flex;
  align-items: center;
  gap: 9px;
  padding: 0;
  border: 0;
  background: none;
  font-size: inherit;
  line-height: inherit;
`;

const Spin = ({ id, value }: { id: string; value: string }) => (
  <SpinBox>
    <PlainInput id={id} defaultValue={value} />
    <SpinButtons>
      <SpinButton type="button" aria-label="증가"><DropArrow /></SpinButton>
      <SpinButton type="button" aria-label="감소" $down><DropArrow /></SpinButton>
    </SpinButtons>
  </SpinBox>
);

const MENUS = ["프로젝트 (&J)", "편집 (&E)", "보기 (&V)", "레이어 (&L)", "설정 (&S)", "플러그인 (&P)", "벡터 (&O)", "래스터 (&R)", "데이터베이스 (&D)", "웹 (&W)", "메시 (&M)", "공간 처리 (&C)", "도움말 (&H)"];

export default function App() {
  return (
    <Page>
      <GlobalStyle />
      <TitleBar>
        <svg width="48" height="48" viewBox="0 0 16 16" aria-hidden="true">
          <circle cx="8" cy="8" r="6" fill="none" stroke="#74aa2c" strokeWidth="3.200" />
          <path d="M7.500 6.500L11 8l-1.500 2.500z" fill="#f58a2c" />
          <path d="M9 9l2-.5 5 6.500h-3.500z" fill="#579c3c" />
          <path d="M8.500 8.500l2-.5.8 1.500-1.500 1.500z" fill="#f5dd3c" />
        </svg>
        <Title>*qgis 연습 — QGIS</Title>
        <WindowButton type="button" aria-label="최소화"><svg width="20" height="20" viewBox="0 0 20 20"><path d="M0 10h20" stroke="#111" strokeWidth="2" /></svg></WindowButton>
        <WindowButton type="button" aria-label="복원"><svg width="22" height="22" viewBox="0 0 22 22" fill="none" stroke="#111" strokeWidth="2"><rect x="1" y="5" width="16" height="16" rx="3" /><path d="M5 2c1-1 2-1 3-1h8c3 0 5 2 5 5v8c0 1 0 2-1 3" /></svg></WindowButton>
        <WindowButton type="button" aria-label="닫기"><svg width="22" height="22" viewBox="0 0 22 22"><path d="M1 1l20 20M21 1L1 21" stroke="#111" strokeWidth="2" /></svg></WindowButton>
      </TitleBar>

      <MenuBar>
        {MENUS.map((m) => <MenuTitle key={m} type="button"><Caption text={m} /></MenuTitle>)}
      </MenuBar>

      <Tools groups={TOP_TOOLS} />
      <Tools groups={EDIT_TOOLS} />

      <Workspace>
        <LayerPanel>
          <PanelHeader>
            <PanelTitle>레이어</PanelTitle>
            <PanelButton type="button" aria-label="패널 분리"><svg width="22" height="22" viewBox="0 0 22 22" fill="none" stroke="#666" strokeWidth="3"><path d="M8 9V3h11v11h-5" /><path d="M3 9h10v10H3z" /></svg></PanelButton>
            <PanelButton type="button" aria-label="패널 닫기"><svg width="22" height="22" viewBox="0 0 22 22"><path d="M3 3l16 16M19 3L3 19" stroke="#555" strokeWidth="5" /></svg></PanelButton>
          </PanelHeader>
          <PanelTools>
            {["brush", "group", "eye", "filter"].map((n) => <PanelTool key={n} type="button" aria-label={n}><Icon16 name={n} /></PanelTool>)}
            <PanelTool type="button" aria-label="표현식 필터" $wide><Icon16 name="expr" /><DropArrow /></PanelTool>
            {["expand", "collapse", "remove"].map((n) => <PanelTool key={n} type="button" aria-label={n}><Icon16 name={n} /></PanelTool>)}
          </PanelTools>
          <Tree>
            <LayerRow $selected>
              <CheckBox id="layer-libraries" type="checkbox" defaultChecked />
              <Symbol $kind="dot" />
              <LayerName htmlFor="layer-libraries" $current>서울시 공공도서관</LayerName>
            </LayerRow>
            <LayerRow>
              <CheckBox id="layer-districts" type="checkbox" defaultChecked />
              <Symbol $kind="fill" />
              <LayerName htmlFor="layer-districts">LARD_ADM_SECT</LayerName>
            </LayerRow>
          </Tree>
          <ScrollBar>
            <ScrollPart type="button" aria-label="왼쪽으로"><SideArrow $left /></ScrollPart>
            <ScrollPart type="button" aria-label="가로 스크롤" />
            <ScrollPart type="button" aria-label="오른쪽으로"><SideArrow /></ScrollPart>
          </ScrollBar>
        </LayerPanel>
        <MapCanvas />
      </Workspace>

      <StatusBar>
        <SearchBox>
          <svg width="38" height="38" viewBox="0 0 38 38" fill="none" stroke="#8a8a8a"><circle cx="16" cy="16" r="13" strokeWidth="3" /><path d="M25 26l10 10" strokeWidth="5" /></svg>
          <SearchInput placeholder="위치를 찾으려면 입력하세요 (Ctrl+K)" aria-label="위치 찾기" />
        </SearchBox>
        <Field $space={42}>
          <label htmlFor="coord">좌표</label>
          <CoordBox><PlainInput id="coord" defaultValue="14099332, 4530383" /></CoordBox>
          <FlatButton type="button" aria-label="좌표 범위 전환">
            <svg width="46" height="48" viewBox="0 0 23 24" fill="#fff" stroke="#000" strokeWidth="2">
              <path d="M5 3c4-3 8 0 9 4l5 6c2 4-1 9-5 9-4 1-8-1-8-5L3 8c-1-2 0-4 2-5z" />
              <path d="M4 9l10-3M9 3l1 5 4 6M7 12c4-3 9-1 8 3s-5 4-6 1M17 5l3-3M19 8l3-1M1 14l3 3M2 19l3 1" fill="none" />
            </svg>
          </FlatButton>
        </Field>
        <Field $space={34}>
          <label htmlFor="scale">축척</label>
          <ComboBox>
            <ComboArrow><DropArrow /></ComboArrow>
            <ScaleSelect id="scale"><option>1:269918</option></ScaleSelect>
          </ComboBox>
        </Field>
        <Field $space={29}>
          <svg width="38" height="46" viewBox="0 0 38 46" aria-hidden="true"><path d="M8 24V13a11 11 0 0 1 22 0v11" fill="none" stroke="#8a8a8a" strokeWidth="5" /><rect x="1" y="21" width="36" height="24" rx="4" fill="#666" /></svg>
        </Field>
        <Field $space={29}>
          <label htmlFor="magnifier">확대경</label>
          <Spin id="magnifier" value="100%" />
        </Field>
        <Field $space={20} $gap={28}>
          <label htmlFor="rotation">회전</label>
          <Spin id="rotation" value="0.0 °" />
        </Field>
        <Field $space={48} $gap={18}>
          <CheckBox id="render" type="checkbox" defaultChecked />
          <label htmlFor="render">렌더링</label>
        </Field>
        <Field $space={78}>
          <FlatButton type="button">
            <svg width="48" height="42" viewBox="0 0 48 42" fill="none" stroke="#777" strokeWidth="3">
              <ellipse cx="24" cy="21" rx="12" ry="19" />
              <path d="M24 2v38M8 8c8 4 24 4 32 0M2 22h44M8 33c8-4 24-4 32 0M24 2C10 2 2 12 2 22h44C46 12 38 2 24 2z" />
            </svg>
            EPSG:3857
          </FlatButton>
        </Field>
        <FlatButton type="button" aria-label="메시지">
          <svg width="50" height="46" viewBox="0 0 50 46"><path d="M25 1c14 0 24 8 24 18 0 6-3 11-8 14l4 12-13-9C15 39 1 31 1 19 1 9 11 1 25 1z" fill="#666" /><g fill="#fff"><circle cx="14" cy="19" r="3.500" /><circle cx="25" cy="19" r="3.500" /><circle cx="36" cy="19" r="3.500" /></g></svg>
        </FlatButton>
      </StatusBar>

      <ContextMenu />

      <Crayon width="820" height="920" viewBox="320 430 820 920" aria-hidden="true">
        <defs>
          <filter id="rough"><feTurbulence type="fractalNoise" baseFrequency=".18" numOctaves="2" /><feDisplacementMap in="SourceGraphic" scale="10" /></filter>
        </defs>
        <g fill="none" stroke="#ee1c24" strokeLinecap="round" strokeLinejoin="round" filter="url(#rough)">
          <path d="M359 456L347 500 336 530" strokeWidth="24" />
          <path d="M1020 1228c5-8 15-12 24-8 12 14 20 36 20 56-2 14-12 24-26 28" strokeWidth="22" />
          <path d="M1030 1292l2 20 22-16 22 8 34-14" strokeWidth="24" />
        </g>
      </Crayon>
    </Page>
  );
}
